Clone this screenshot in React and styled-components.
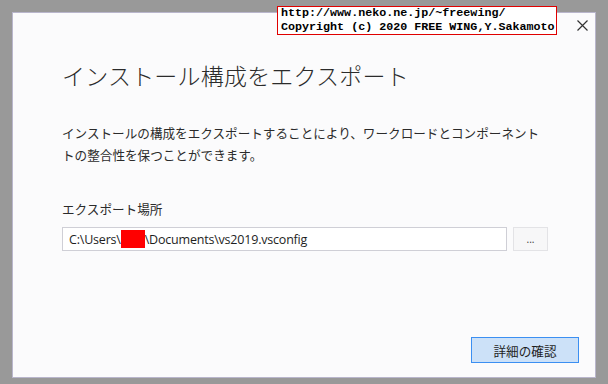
import React from 'react';
import { styled, createGlobalStyle } from 'styled-components';

const GlobalStyle = createGlobalStyle`
  html, body {
    margin: 0;
    padding: 0;
    background: #999999;
  }
  body {
    font-family: "Noto Sans CJK JP", "Noto Sans", sans-serif;
  }
`;

function App() {
  return (
    <Page>
      <GlobalStyle />
      <Dialog>
        <Watermark>
          <div>http://www.neko.ne.jp/~freewing/</div>
          <div>Copyright (c) 2020 FREE WING,Y.Sakamoto</div>
        </Watermark>
        <CloseButton aria-label="close">
          <svg width="11" height="11" viewBox="0 0 11 11">
            <path d="M0.5 0.5 L10.5 10.5 M10.5 0.5 L0.5 10.5" stroke="#333" strokeWidth="1.2" fill="none" />
          </svg>
        </CloseButton>
        <Body>
          <Title>インストール構成をエクスポート</Title>
          <Description>
            インストールの構成をエクスポートすることにより、ワークロードとコンポーネント
            <br />
            トの整合性を保つことができます。
          </Description>
          <Label>エクスポート場所</Label>
          <PathRow>
            <PathField>
              <span>C:\Users\</span>
              <Redacted />
              <span>\Documents\vs2019.vsconfig</span>
            </PathField>
            <BrowseButton>...</BrowseButton>
          </PathRow>
        </Body>
        <Footer>
          <PrimaryButton>詳細の確認</PrimaryButton>
        </Footer>
      </Dialog>
    </Page>
  );
}

export default App;

const Page = styled.div`
  width: 608px;
  height: 384px;
  box-sizing: border-box;
  padding: 12px 12px 6px 12px;
  background: #999999;
`;

const Dialog = styled.div`
  position: relative;
  width: 584px;
  height: 366px;
  box-sizing: border-box;
  background: #fbfbfc;
  border: 1px solid #b9b6cc;
  display: flex;
  flex-direction: column;
`;

const Watermark = styled.div`
  position: absolute;
  left: 264px;
  top: -7px;
  width: 280px;
  height: 29px;
  box-sizing: border-box;
  border: 1px solid #e00000;
  background: #ffffff;
  padding: 0 0 0 3px;
  font-family: "Liberation Mono", monospace;
  font-weight: bold;
  font-size: 11.7px;
  line-height: 13.5px;
  color: #000;
  white-space: nowrap;
`;

const CloseButton = styled.div`
  position: absolute;
  right: 7px;
  top: 7px;
  width: 11px;
  height: 11px;
  display: flex;
`;

const Body = styled.div`
  display: flex;
  flex-direction: column;
  padding: 46px 0 0 49px;
`;

const Title = styled.div`
  font-size: 23px;
  font-weight: 300;
  line-height: 32px;
  color: #2b2b2b;
  letter-spacing: 0.2px;
`;

const Description = styled.div`
  margin-top: 31px;
  font-size: 12.6px;
  line-height: 22px;
  color: #2b2b2b;
`;

const Label = styled.div`
  margin-top: 33px;
  font-size: 12.6px;
  line-height: 20px;
  color: #2b2b2b;
`;

const PathRow = styled.div`
  margin-top: 8px;
  display: flex;
  gap: 6px;
`;

const PathField = styled.div`
  width: 445px;
  height: 24px;
  box-sizing: border-box;
  border: 1px solid #cfcfd6;
  background: #ffffff;
  display: flex;
  align-items: center;
  padding-left: 6px;
  font-family: "Open Sans", "Noto Sans", sans-serif;
  font-size: 12.5px;
  color: #1e1e1e;
  letter-spacing: -0.2px;
`;

const Redacted = styled.span`
  display: inline-block;
  width: 24px;
  height: 18px;
  background: #ff0000;
`;

const BrowseButton = styled.div`
  width: 35px;
  height: 24px;
  box-sizing: border-box;
  border: 1px solid #e3e3e6;
  background: #f7f7f8;
  display: flex;
  align-items: center;
  justify-content: center;
  font-family: "Noto Sans", sans-serif;
  font-size: 10px;
  color: #444;
`;

const Footer = styled.div`
  margin-top: auto;
  display: flex;
  justify-content: flex-end;
  padding: 0 16px 14px 0;
`;

const PrimaryButton = styled.div`
  width: 108px;
  height: 26px;
  box-sizing: border-box;
  border: 1px solid #3b8ff2;
  background: #cce1f8;
  display: flex;
  align-items: center;
  justify-content: center;
  font-size: 12.6px;
  color: #1e1e1e;
`;
